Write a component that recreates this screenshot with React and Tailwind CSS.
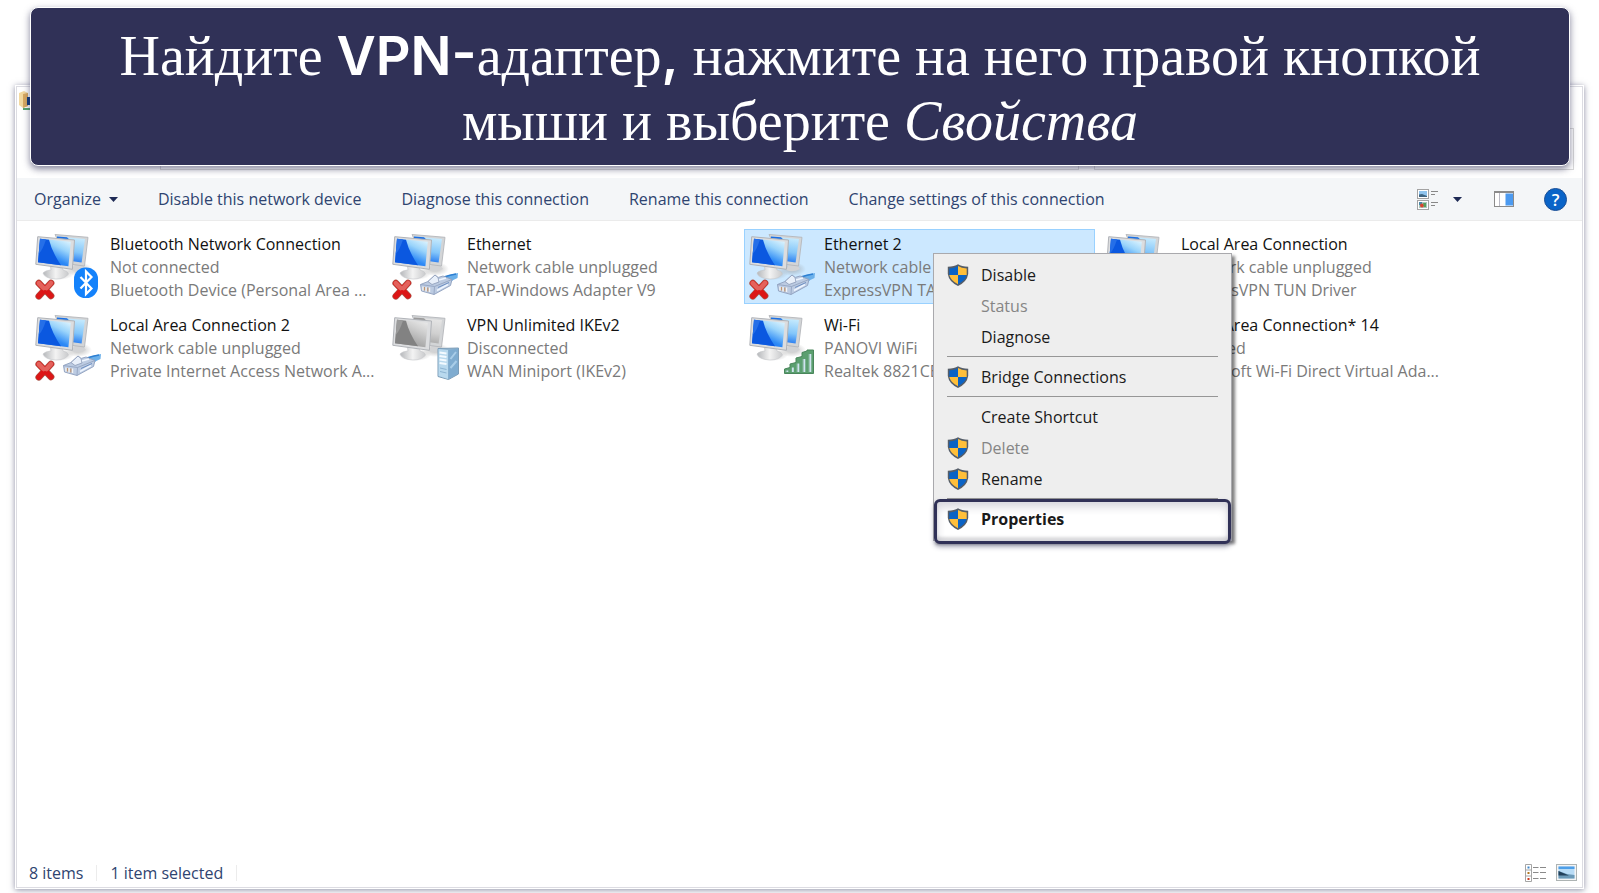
import { useId } from 'react'

const connections = [
  { name: 'Bluetooth Network Connection', status: 'Not connected', device: 'Bluetooth Device (Personal Area ...', badge: 'bluetooth', off: true },
  { name: 'Ethernet', status: 'Network cable unplugged', device: 'TAP-Windows Adapter V9', badge: 'plug', off: true },
  { name: 'Ethernet 2', status: 'Network cable unplugged', device: 'ExpressVPN TAP Adapter', badge: 'plug', off: true, selected: true },
  { name: 'Local Area Connection', status: 'Network cable unplugged', device: 'ExpressVPN TUN Driver', badge: 'plug', off: true },
  { name: 'Local Area Connection 2', status: 'Network cable unplugged', device: 'Private Internet Access Network A...', badge: 'plug', off: true },
  { name: 'VPN Unlimited IKEv2', status: 'Disconnected', device: 'WAN Miniport (IKEv2)', badge: 'server', gray: true },
  { name: 'Wi-Fi', status: 'PANOVI WiFi', device: 'Realtek 8821CE Wireless LAN', badge: 'wifi' },
  { name: 'Local Area Connection* 14', status: 'Disabled', device: 'Microsoft Wi-Fi Direct Virtual Ada...', badge: 'wifi', gray: true },
]

const menuItems = [
  { label: 'Disable', shield: true },
  { label: 'Status', disabled: true },
  { label: 'Diagnose' },
  { separator: true },
  { label: 'Bridge Connections', shield: true },
  { separator: true },
  { label: 'Create Shortcut' },
  { label: 'Delete', shield: true, disabled: true },
  { label: 'Rename', shield: true },
  { separator: true },
  { label: 'Properties', shield: true, highlight: true },
]

const commands = [
  'Disable this network device',
  'Diagnose this connection',
  'Rename this connection',
  'Change settings of this connection',
]

function RedCross() {
  return (
    <g strokeLinecap="round">
      <path d="M3.8 50.2 L16 62.8 M16 50 L3.8 63.2" stroke="#a9564a" strokeWidth="6.8" />
      <path d="M3.8 50.2 L16 62.8 M16 50 L3.8 63.2" stroke="#dc1616" strokeWidth="5.4" />
      <path d="M3.8 50.2 L8.5 55 M16 50 L11.5 55" stroke="#e3625c" strokeWidth="4.6" />
    </g>
  )
}

function Badge({ type }) {
  if (type === 'bluetooth') {
    return (
      <g>
        <rect x="39" y="34.5" width="24" height="30.5" rx="11.5" fill="#1482fb" />
        <path d="M45.5 44 L56.5 55.5 L51 61 V38.5 L56.5 44 L45.5 55.5" fill="none" stroke="#fff" strokeWidth="2.2" />
      </g>
    )
  }
  if (type === 'plug') {
    return (
      <g strokeLinejoin="round">
        <path d="M51 44 Q58 41.5 66 40 L65.5 45 Q60 47 57.5 50 Z" fill="#6bb0ea" />
        <path d="M52 44 Q58 42 64 41" stroke="#2d7fd2" strokeWidth="1.6" />
        <path d="M28.5 51.5 L36 48.5 L43 42 L46 44.5 L51 43 L60 46.5 L58.5 52.5 L42 61.5 L29.5 58 Z" fill="#bccbe2" stroke="#8e9fbd" strokeWidth=".9" />
        <path d="M36 48.5 L43 42 L46 44.5 L47 49 L40 51.5 Z" fill="#e9f0fa" stroke="#8a99b6" strokeWidth=".8" />
        <path d="M28.5 51.5 L42.5 53.5 L42 61.5 M42.5 53.5 L60 46.5" fill="none" stroke="#94a5c2" strokeWidth=".9" />
        <path d="M45 57.5 L56 51.5 M47 47 L54 45" stroke="#eef5ff" strokeWidth="1.8" />
        <path d="M46 54.5 L57 49.5" stroke="#6d8fc2" strokeWidth="1" />
        <path d="M31 53.5 V57.5 M34 54 V58.5 M37.5 54.5 V59" stroke="#f4f4f4" strokeWidth="1.4" />
        <path d="M32.5 54 V57.5 M35.8 54.5 V58.5" stroke="#bf9571" strokeWidth="1.2" />
      </g>
    )
  }
  if (type === 'server') {
    return (
      <g>
        <path d="M46 34.5 L66.5 34 V60 L56.5 65.5 L46 62.5 Z" fill="#8fb3cf" stroke="#7c9db8" />
        <path d="M46.5 35 L56 36 V65 L46.5 62 Z" fill="#b9d9ee" />
        <path d="M56.5 36 L66 34.5 V59.8 L56.5 65 Z" fill="#7facd0" />
        <path d="M47.5 38.5 L54.5 39.5 M47.5 42 L54.5 43 M47.5 45.5 L54.5 46.5 M47.5 49 L54.5 50" stroke="#f3faff" strokeWidth="1.8" />
        <path d="M48 54 L54.5 55.5 M48 57.5 L54.5 59" stroke="#8db4d2" />
        <path d="M58.5 45 L64 38 M58.5 54 L64.5 47" stroke="#a9cde8" strokeWidth="2" />
      </g>
    )
  }
  return (
    <g>
      <path d="M35.5 59.5 V55 L41 53.5 V50 L47 48.5 V44 L53 42.5 V38.5 L58 37 V36 H64.5 V59.5 Z" fill="#5b9f6f" stroke="#49865b" />
      <path d="M38 56.5 V58 M43.5 53.5 V58 M49 49.5 V58 M55 45 V58 M61 40 V58" stroke="#cfe3ef" strokeWidth="2.6" />
      <path d="M37 58 V56 M42.5 58 V53 M48 58 V48 M54 58 V44 M60 58 V40" stroke="#5b9f6f" strokeWidth=".8" />
    </g>
  )
}

function ConnectionIcon({ badge, off, gray }) {
  const id = useId()
  return (
    <svg viewBox="0 0 68 68" className="h-[68px] w-[68px] shrink-0" fill="none" aria-hidden="true">
      <defs>
        <linearGradient id={`${id}s`} x1=".2" y1="1" x2=".8" y2="0">
          <stop offset="0" stopColor={gray ? '#8f8f8f' : '#0f62ee'} />
          <stop offset=".35" stopColor={gray ? '#adadad' : '#2f8bf6'} />
          <stop offset=".7" stopColor={gray ? '#cfcfcf' : '#9ad4fb'} />
          <stop offset="1" stopColor={gray ? '#e8e8e8' : '#d9f2fe'} />
        </linearGradient>
        <linearGradient id={`${id}b`} x1=".3" y1="0" x2=".1" y2="1">
          <stop offset="0" stopColor={gray ? '#e4e4e4' : '#c2e8fd'} />
          <stop offset=".5" stopColor={gray ? '#d0d0d0' : '#83c6fa'} />
          <stop offset="1" stopColor={gray ? '#a2a2a2' : '#0f68ee'} />
        </linearGradient>
        <radialGradient id={`${id}f`}>
          <stop offset="0" stopColor="#8e8e8e" stopOpacity=".6" />
          <stop offset="1" stopColor="#8e8e8e" stopOpacity="0" />
        </radialGradient>
        <linearGradient id={`${id}g`} x1="0" y1="0" x2="1" y2="0">
          <stop offset="0" stopColor="#b5b7ba" />
          <stop offset=".5" stopColor="#f3f3f3" />
          <stop offset="1" stopColor="#c9cacc" />
        </linearGradient>
      </defs>
      <ellipse cx="43" cy="36" rx="14" ry="7" fill={`url(#${id}f)`} />
      <path d="M40 31 L48 32 L51 36 Q44 40 37 37 Z" fill="#d2d3d5" />
      <path d="M20 1.5 L53 4.3 L49.5 33 L34 31 Z" fill="#d3d5d7" stroke="#b4b7bb" strokeWidth=".9" />
      <path d="M22 3.4 L50 6 L46.6 29.5 L36 28 Z" fill={`url(#${id}b)`} />
      <path d="M22 3.4 L32 4.3 Q34 6 36 9 L22 7 Z" fill={gray ? '#9a9a9a' : '#1b6fe4'} />
      <ellipse cx="23" cy="41" rx="16" ry="6" fill={`url(#${id}f)`} />
      <path d="M15 31 L27 33 L28 37 Q33 38 33.5 41 Q30 46 21 46 Q10 45.5 8 40 Q10 37.5 16 37 Z" fill={`url(#${id}g)`} stroke="#c6c8cb" strokeWidth=".6" />
      <path d="M2.7 3.7 L39.5 7 L37.4 36.3 L.8 31.3 Z" fill="#dcdddf" stroke="#b0b3b8" strokeWidth="1" />
      <path d="M5 5.8 L35.8 8.7 L33.4 33.2 L3 29.2 Z" fill={`url(#${id}s)`} />
      <path d="M5 5.8 L14 6.7 Q17 19 26 32.2 L3 29.2 Z" fill={gray ? '#828282' : '#0b58e0'} />
      <path d="M5 5.8 L11 6.4 Q8 16 3.8 21 Z" fill={gray ? '#9b9b9b' : '#256fe8'} />
      {off && <RedCross />}
      <Badge type={badge} />
    </svg>
  )
}

function Shield() {
  return (
    <svg viewBox="0 0 22 22" className="h-[22px] w-[22px] shrink-0" aria-hidden="true">
      <path d="M11 .2 Q14.5 2.6 21.2 2.8 V10 Q20 17.9 11 21.9 Q2 17.9 .8 10 V2.8 Q7.5 2.6 11 .2 Z" fill="#555d68" />
      <path d="M11 2 Q7.5 4.2 2.3 4.4 V11 H11 Z" fill="#0b63c5" />
      <path d="M11 2 Q14.5 4.2 19.7 4.4 V11 H11 Z" fill="#ffbf3a" />
      <path d="M2.3 11 Q4 17 11 20.2 V11 Z" fill="#ffbf3a" />
      <path d="M19.7 11 Q18 17 11 20.2 V11 Z" fill="#0b63c5" />
    </svg>
  )
}

function ContextMenu() {
  return (
    <div role="menu" className="absolute top-[23px] left-[188px] z-10 w-[299px] border border-[#a9a9ad] bg-[#eeeeee] pt-[5px] pb-[6px] shadow-[3px_3px_3px_rgba(0,0,0,0.5)]">
      {menuItems.map((item, i) =>
        item.separator ? (
          <div key={i} role="separator" className="mx-[13px] flex h-[9px] items-center">
            <div className="h-px w-full bg-[#969696]" />
          </div>
        ) : (
          <button
            key={i}
            type="button"
            role="menuitem"
            disabled={item.disabled}
            className={`relative flex h-[31px] w-full items-center pl-[13px] text-left text-[16px] ${item.disabled ? 'text-[#858585]' : 'text-[#1a1a1a]'} ${item.highlight ? 'font-bold' : ''}`}
          >
            {item.highlight && (
              <span className="absolute inset-x-0 -top-1 -bottom-[10px] rounded-md border-[3px] border-[#303157] bg-white shadow-[0_3px_5px_rgba(48,49,87,0.4),inset_0_5px_8px_rgba(48,49,87,0.2),inset_0_-4px_3px_#dddddf]" />
            )}
            <span className="relative w-[34px]">{item.shield && <Shield />}</span>
            <span className="relative">{item.label}</span>
          </button>
        )
      )}
    </div>
  )
}

function Tile({ item }) {
  return (
    <div className={`relative flex h-[75px] gap-[7px] border pt-[3px] pl-1 ${item.selected ? 'border-[#99d1ff] bg-[#cce8ff]' : 'border-transparent'}`}>
      <ConnectionIcon badge={item.badge} off={item.off} gray={item.gray} />
      <div className="min-w-0 text-[16px] leading-[23px] whitespace-nowrap text-[#7a7a7a]">
        <p className="text-[#111]">{item.name}</p>
        <p>{item.status}</p>
        <p>{item.device}</p>
      </div>
      {item.selected && <ContextMenu />}
    </div>
  )
}

function Caret() {
  return (
    <svg viewBox="0 0 9 5" className="h-[5px] w-[9px]" aria-hidden="true">
      <path d="M0 0 H9 L4.5 5 Z" fill="#1e2a55" />
    </svg>
  )
}

function Toolbar() {
  return (
    <div className="flex h-[43px] shrink-0 items-center border-b border-[#ebebeb] bg-[#f4f6f8] pr-[15px] pl-[17px] text-[16px] text-[#2f4470]">
      <div className="flex items-center gap-10">
        <button type="button" className="flex items-center gap-2">
          Organize <Caret />
        </button>
        {commands.map(c => (
          <button key={c} type="button">{c}</button>
        ))}
      </div>
      <div className="ml-auto flex items-center">
        <button type="button" aria-label="Change your view" className="flex items-center gap-[15px]">
          <svg viewBox="0 0 21 21" className="h-[21px] w-[21px]" aria-hidden="true">
            <rect x=".5" y=".5" width="11" height="9" fill="#fff" stroke="#a3a3a3" />
            <rect x="2" y="2" width="8" height="6" fill="#8fc4ee" />
            <path d="M2 5.5 L5 5 L10 7 V8 H2 Z" fill="#3f6581" />
            <rect x=".5" y="11.5" width="11" height="9" fill="#fff" stroke="#a3a3a3" />
            <rect x="2" y="13" width="8" height="6" fill="#a9c8bd" />
            <path d="M2 13 H5 V16 H2 Z" fill="#4a86a8" />
            <circle cx="5" cy="16.5" r="2" fill="#d8452e" />
            <path d="M6 14 H9 V18 H7 Z" fill="#58a05b" />
            <path d="M14 2.5 H21 M14 5.5 H18 M14 13.5 H21 M14 16.5 H18" stroke="#888" />
          </svg>
          <Caret />
        </button>
        <button type="button" aria-label="Show the preview pane" className="ml-8">
          <svg viewBox="0 0 20 16" className="block h-4 w-5" aria-hidden="true">
            <rect x=".5" y=".5" width="19" height="15" fill="#fff" stroke="#8b8b8b" />
            <path d="M1 1.5 H19" stroke="#8b8b8b" />
            <path d="M5.5 2 V15" stroke="#b9b9c4" />
            <rect x="11.5" y="2.5" width="7.5" height="12" fill="#4c9af0" />
          </svg>
        </button>
        <button type="button" aria-label="Get help" className="ml-[30px] flex h-[23px] w-[23px] items-center justify-center rounded-full border border-[#1c4f96] bg-[#0a64c8] text-[17px] leading-none font-semibold text-white">
          ?
        </button>
      </div>
    </div>
  )
}

function StatusBar() {
  return (
    <div className="flex h-[29px] shrink-0 items-center pr-[5px] pl-3 text-[16px] text-[#2f4470]">
      <span className="pr-[13px]">8 items</span>
      <span className="border-l border-[#ececec] px-[13px] leading-4">1 item selected</span>
      <span className="h-4 w-px bg-[#ececec]" />
      <div className="ml-auto flex items-center gap-[10px]">
        <button type="button" aria-label="Details view">
          <svg viewBox="0 0 21 18" className="block h-[18px] w-[21px]" aria-hidden="true">
            <path d="M.5 .5 H6.5 V17.5 H.5 Z M.5 6 H6.5 M.5 12 H6.5" fill="#fff" stroke="#a5a5a5" />
            <rect x="2.5" y="2.5" width="2" height="2" fill="#3d86c9" />
            <rect x="2.5" y="8" width="2" height="2" fill="#b0761e" />
            <rect x="2.5" y="14" width="2" height="2" fill="#cc3a1f" />
            <path d="M8 3.5 H13.5 M15 3.5 H21 M8 8.5 H13.5 M15 8.5 H21 M8 14.5 H13.5 M15 14.5 H21" stroke="#8a8a8a" />
          </svg>
        </button>
        <button type="button" aria-label="Large icons view">
          <svg viewBox="0 0 21 17" className="block h-[17px] w-[21px]" aria-hidden="true">
            <rect x=".5" y=".5" width="20" height="16" fill="#f5f5f5" stroke="#adb3b3" />
            <rect x="2.5" y="2.5" width="16" height="12" fill="#b9dcf6" />
            <path d="M2.5 2.5 H18.5 V5 H2.5 Z" fill="#4e9fe8" />
            <path d="M2.5 7 Q7 8.5 11 10 L18.5 11 V14.5 H2.5 Z" fill="#6c9ab8" />
            <path d="M2.5 7 L7 9 L13 11.5 H2.5 Z" fill="#22405a" />
          </svg>
        </button>
      </div>
    </div>
  )
}

function Banner() {
  return (
    <h1 className="absolute top-[7px] right-[29px] left-[30px] z-20 rounded-lg border border-white bg-[#303157] px-20 pt-4 pb-[11px] text-center font-['Liberation_Serif',serif] text-[56px] leading-[65px] text-white shadow-[0_3px_7px_rgba(48,49,87,0.6)]">
      Найдите <span className="font-['Inter',sans-serif] text-[54px] leading-none font-semibold">VPN-</span>адаптер
      <span className="font-['Inter',sans-serif] text-[54px] leading-none font-semibold">,</span> нажмите на него правой кнопкой
      <br />
      мыши и выберите <em>Свойства</em>
    </h1>
  )
}

export default function App() {
  return (
    <div className="relative flex min-h-screen flex-col bg-white px-[15px] pt-[85px] pb-1 font-['Open_Sans',sans-serif]">
      <Banner />
      <div className="flex grow flex-col border border-white bg-white shadow-[0_1px_6px_rgba(48,49,87,0.55)]">
        <main className="flex grow flex-col border border-[#dcdce2]">
          <div className="flex h-[91px] shrink-0 items-end justify-between pt-1 pr-2 pb-2 pl-[2px]">
            <svg viewBox="0 0 22 20" className="h-5 w-[22px] self-start" aria-hidden="true">
              <path d="M0 2 L5 0 L9 2 V15 L4 17 L0 14 Z" fill="#f3d9a0" />
              <path d="M4 3 L9 2 V15 L4 17 Z" fill="#d8a860" />
              <rect x="8" y="6" width="12" height="8" fill="#123a7c" />
              <path d="M4 17 H14 V19 H4 Z" fill="#58a66f" />
            </svg>
            <div className="ml-[119px] flex grow gap-[15px]">
              <input aria-label="Address" className="h-[42px] min-w-0 grow border border-[#d9d9d9]" />
              <input aria-label="Search" className="h-[42px] w-[480px] border border-[#d9d9d9]" />
            </div>
          </div>
          <Toolbar />
          <div className="grid grow auto-rows-[75px] grid-cols-[repeat(auto-fill,351px)] content-start gap-[6px] pt-2 pl-[13px]">
            {connections.map(c => (
              <Tile key={c.name} item={c} />
            ))}
          </div>
          <StatusBar />
        </main>
      </div>
    </div>
  )
}
